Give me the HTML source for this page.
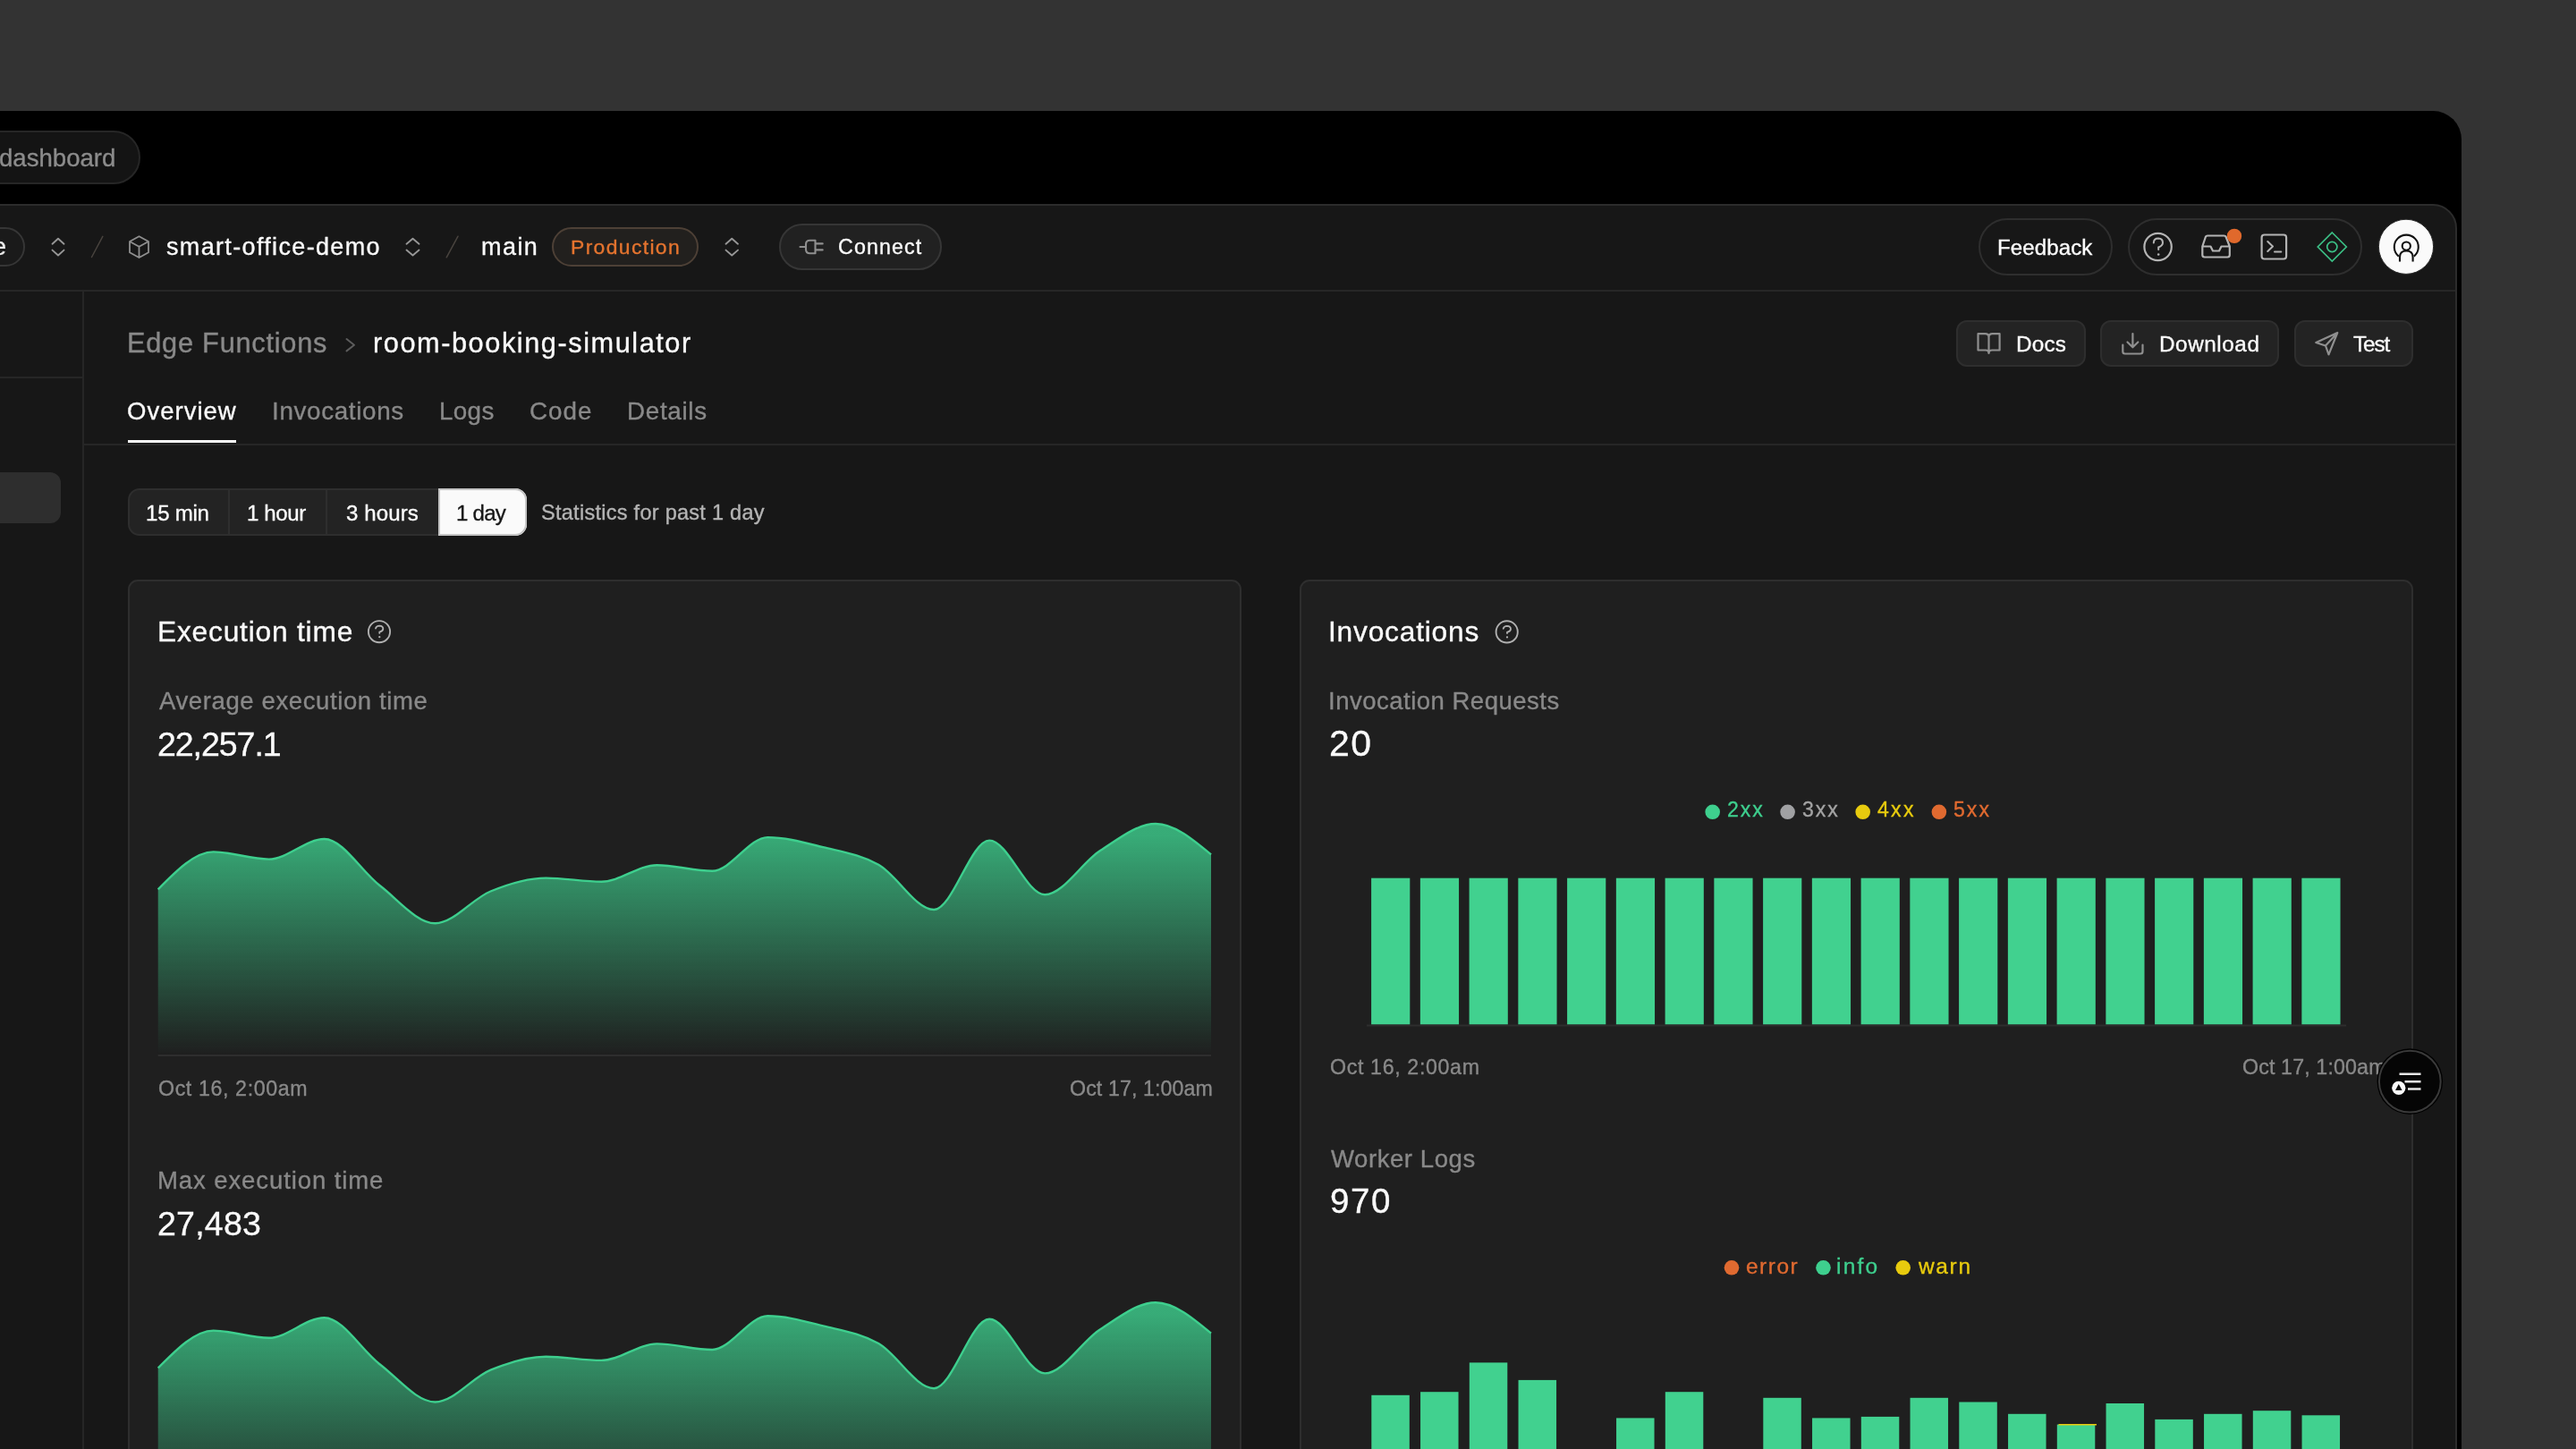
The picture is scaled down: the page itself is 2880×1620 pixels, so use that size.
<!DOCTYPE html>
<html><head><meta charset="utf-8"><style>
html,body{margin:0;padding:0;}
body{width:2880px;height:1620px;overflow:hidden;position:relative;background:#333333;font-family:"Liberation Sans",sans-serif;}
.t{position:absolute;white-space:pre;line-height:1;will-change:transform;-webkit-text-stroke:0.35px currentColor;}
.r{position:absolute;box-sizing:border-box;}
.s{position:absolute;left:0;top:0;overflow:visible;}
</style></head><body>
<div class="r" style="left:-60.00px;top:124.00px;width:2812.00px;height:1576.00px;background:#000000;border-radius:0px;border-top-right-radius:32px;border-radius:0 32px 0 0;"></div>
<div class="r" style="left:-60.00px;top:146.00px;width:217.00px;height:60.00px;background:#141414;border:2px solid #262626;border-radius:30px;box-sizing:border-box;"></div>
<div class="t " style="left:-1.46px;top:162.83px;font-size:27.60px;letter-spacing:0.000px;color:#8c8c8c">dashboard</div>
<div class="r" style="left:-60.00px;top:228.00px;width:2807.00px;height:1472.00px;background:#171717;border:2px solid #2c2c2c;border-radius:0px;box-sizing:border-box;border-radius:0 27px 0 0;"></div>
<div class="r" style="left:0.00px;top:323.50px;width:2745.00px;height:2.00px;background:#262626;border-radius:0px;"></div>
<div class="r" style="left:92.00px;top:325.00px;width:2.00px;height:1295.00px;background:#262626;border-radius:0px;"></div>
<div class="r" style="left:0.00px;top:420.50px;width:93.00px;height:2.00px;background:#262626;border-radius:0px;"></div>
<div class="r" style="left:-20.00px;top:528.00px;width:87.70px;height:56.60px;background:#2e2e2e;border-radius:12px;"></div>
<div class="r" style="left:-60.00px;top:254.00px;width:88.00px;height:44.00px;background:#1a1a1a;border:2px solid #363636;border-radius:22px;box-sizing:border-box;"></div>
<div class="t " style="left:-8.20px;top:262.67px;font-size:26.97px;letter-spacing:0.000px;color:#ededed">e</div>
<div class="t " style="left:186.45px;top:263.07px;font-size:26.97px;letter-spacing:1.356px;color:#fafafa">smart-office-demo</div>
<div class="t " style="left:538.21px;top:263.07px;font-size:26.97px;letter-spacing:1.465px;color:#fafafa">main</div>
<div class="r" style="left:617.00px;top:254.00px;width:164.30px;height:44.00px;background:#22201e;border:2px solid #4d4036;border-radius:22px;box-sizing:border-box;"></div>
<div class="t " style="left:638.32px;top:265.38px;font-size:22.93px;letter-spacing:1.347px;color:#e5742f">Production</div>
<div class="r" style="left:871.00px;top:250.00px;width:181.70px;height:52.10px;background:#212121;border:2px solid #363636;border-radius:26px;box-sizing:border-box;"></div>
<div class="t " style="left:936.82px;top:264.85px;font-size:23.21px;letter-spacing:1.148px;color:#fafafa">Connect</div>
<svg class="s" width="2880" height="1620" viewBox="0 0 2880 1620" ><path d="M58.5,272.7 L65.0,266.8 L71.5,272.7 M58.5,279.6 L65.0,285.5 L71.5,279.6" fill="none" stroke="#979797" stroke-width="1.9" stroke-linecap="round" stroke-linejoin="round"/><path d="M454.5,272.7 L461.5,266.8 L468.5,272.7 M454.5,279.6 L461.5,285.5 L468.5,279.6" fill="none" stroke="#979797" stroke-width="1.9" stroke-linecap="round" stroke-linejoin="round"/><path d="M811.5,272.7 L818.25,266.8 L825,272.7 M811.5,279.6 L818.25,285.5 L825,279.6" fill="none" stroke="#979797" stroke-width="1.9" stroke-linecap="round" stroke-linejoin="round"/><path d="M102.5,287.5 L114.8,264.3 M499.2,287.8 L512,264.2" stroke="#48433e" stroke-width="1.5" stroke-linecap="round"/><path d="M155.5,264.2 L166,270 L166,282.2 L155.5,288 L145,282.2 L145,270 Z M145,270 L155.5,275.8 L166,270 M155.5,275.8 L155.5,288" fill="none" stroke="#8f8f8f" stroke-width="1.8" stroke-linejoin="round"/><path d="M894.5,276 L901,276 M911.5,268.8 L905.5,268.8 Q901,268.8 901,273.3 L901,278.7 Q901,283.2 905.5,283.2 L911.5,283.2 Z M911.5,272.4 L919.7,272.4 M911.5,279.4 L919.7,279.4" fill="none" stroke="#8f8f8f" stroke-width="2.1" stroke-linejoin="round" stroke-linecap="round"/></svg>
<div class="r" style="left:2212.00px;top:244.00px;width:149.60px;height:64.00px;background:none;border:2px solid #2e2e2e;border-radius:32px;box-sizing:border-box;"></div>
<div class="t " style="left:2233.43px;top:264.74px;font-size:24.05px;letter-spacing:0.105px;color:#fafafa">Feedback</div>
<div class="r" style="left:2379.00px;top:244.00px;width:261.50px;height:64.00px;background:none;border:2px solid #2e2e2e;border-radius:32px;box-sizing:border-box;"></div>
<svg class="s" width="2880" height="1620" viewBox="0 0 2880 1620" ><circle cx="2412.6" cy="276" r="15.2" fill="none" stroke="#b4b4b4" stroke-width="2.2"/><path d="M2407.8,271.5 Q2408,266.5 2413,266.5 Q2418,266.8 2418,271.2 Q2418,274.5 2413.2,276.5 L2413.2,279" fill="none" stroke="#b4b4b4" stroke-width="2" stroke-linecap="round"/><circle cx="2413.2" cy="284.5" r="1.3" fill="#b4b4b4"/><path d="M2462.3,275.5 L2466,264.5 Q2466.5,263.5 2468,263.5 L2486.5,263.5 Q2488,263.5 2488.5,264.5 L2492.8,275.5 L2492.8,285 Q2492.8,287.5 2490.3,287.5 L2464.8,287.5 Q2462.3,287.5 2462.3,285 Z M2462.3,275.5 L2471.5,275.5 L2474,280.5 L2481,280.5 L2483.5,275.5 L2492.8,275.5" fill="none" stroke="#b4b4b4" stroke-width="2.2" stroke-linejoin="round"/><circle cx="2498" cy="263.9" r="8.2" fill="#e0692c"/><rect x="2528.6" y="262.5" width="27.5" height="27" rx="3" fill="none" stroke="#b4b4b4" stroke-width="2.2"/><path d="M2535.3,270 L2541,275.5 L2535.3,281 M2543,281.5 L2550.3,281.5" fill="none" stroke="#b4b4b4" stroke-width="2" stroke-linecap="round" stroke-linejoin="round"/><path d="M2607.3,260 L2623.3,276 L2607.3,292 L2591.3,276 Z" fill="none" stroke="#3bbf85" stroke-width="1.7" stroke-linejoin="miter"/><circle cx="2607.3" cy="276" r="5.6" fill="none" stroke="#3bbf85" stroke-width="1.7"/><circle cx="2690" cy="275.8" r="30.6" fill="#fafafa" stroke="#2a2a2a" stroke-width="1"/><path d="M2681.8,286.6 A13.5,13.5 0 1 1 2698.8,286.6" fill="none" stroke="#111" stroke-width="2.1"/><circle cx="2690.3" cy="275.1" r="4.6" fill="none" stroke="#111" stroke-width="2.1"/><path d="M2683,292.4 L2683,287.5 Q2683,280.5 2690.3,280.5 Q2697.6,280.5 2697.6,287.5 L2697.6,292.4" fill="none" stroke="#111" stroke-width="2.1"/></svg>
<div class="t " style="left:141.78px;top:369.09px;font-size:30.72px;letter-spacing:0.767px;color:#898989">Edge Functions</div>
<div class="t " style="left:417.16px;top:369.09px;font-size:30.72px;letter-spacing:1.551px;color:#fafafa">room-booking-simulator</div>
<svg class="s" width="2880" height="1620" viewBox="0 0 2880 1620" ><path d="M387.5,379 L396,385.7 L387.5,392.4" fill="none" stroke="#5c5c5c" stroke-width="2" stroke-linecap="round" stroke-linejoin="round"/></svg>
<div class="r" style="left:2187.20px;top:358.20px;width:144.60px;height:52.10px;background:#232323;border:2px solid #2e2e2e;border-radius:12px;box-sizing:border-box;"></div>
<div class="r" style="left:2348.30px;top:358.20px;width:199.60px;height:52.10px;background:#232323;border:2px solid #2e2e2e;border-radius:12px;box-sizing:border-box;"></div>
<div class="r" style="left:2565.20px;top:358.20px;width:132.70px;height:52.10px;background:#232323;border:2px solid #2e2e2e;border-radius:12px;box-sizing:border-box;"></div>
<div class="t " style="left:2253.50px;top:373.00px;font-size:24.32px;letter-spacing:0.185px;color:#fafafa">Docs</div>
<div class="t " style="left:2414.20px;top:373.00px;font-size:24.32px;letter-spacing:0.540px;color:#fafafa">Download</div>
<div class="t " style="left:2631.05px;top:373.00px;font-size:24.32px;letter-spacing:-1.128px;color:#fafafa">Test</div>
<svg class="s" width="2880" height="1620" viewBox="0 0 2880 1620" ><path d="M2223.5,374.5 L2223.5,393.5 M2211.5,373.2 L2219.5,373.2 Q2223.5,373.2 2223.5,377 Q2223.5,373.2 2227.5,373.2 L2235.6,373.2 L2235.6,391.5 L2227,391.5 Q2223.5,391.5 2223.5,395 Q2223.5,391.5 2220,391.5 L2211.5,391.5 Z" fill="none" stroke="#8f8f8f" stroke-width="2.2" stroke-linejoin="round"/><path d="M2384.4,373 L2384.4,388 M2378.5,382.5 L2384.4,388.3 L2390.3,382.5 M2373.3,385.5 L2373.3,393 Q2373.3,395.5 2375.8,395.5 L2393,395.5 Q2395.5,395.5 2395.5,393 L2395.5,385.5" fill="none" stroke="#8f8f8f" stroke-width="2.2" stroke-linecap="round" stroke-linejoin="round"/><path d="M2613.3,372 L2589.3,383 L2600,386.5 L2603.5,396.3 Z M2600,386.5 L2613.3,372" fill="none" stroke="#8f8f8f" stroke-width="2.2" stroke-linejoin="round" stroke-linecap="round"/></svg>
<div class="t " style="left:142.20px;top:446.20px;font-size:27.52px;letter-spacing:1.006px;color:#fafafa">Overview</div>
<div class="t " style="left:303.73px;top:445.96px;font-size:27.80px;letter-spacing:0.654px;color:#898989">Invocations</div>
<div class="t " style="left:491.02px;top:445.96px;font-size:27.80px;letter-spacing:0.334px;color:#898989">Logs</div>
<div class="t " style="left:592.29px;top:445.96px;font-size:27.80px;letter-spacing:1.029px;color:#898989">Code</div>
<div class="t " style="left:701.22px;top:445.96px;font-size:27.80px;letter-spacing:0.685px;color:#898989">Details</div>
<div class="r" style="left:143.00px;top:491.60px;width:121.00px;height:3.90px;background:#fafafa;border-radius:0px;"></div>
<div class="r" style="left:93.00px;top:496.00px;width:2652.00px;height:2.00px;background:#262626;border-radius:0px;"></div>
<div class="r" style="left:143.00px;top:546.40px;width:445.80px;height:52.60px;background:#232323;border:2px solid #2e2e2e;border-radius:13px;box-sizing:border-box;"></div>
<div class="r" style="left:254.50px;top:548.00px;width:2.00px;height:49.00px;background:#2e2e2e;border-radius:0px;"></div>
<div class="r" style="left:364.00px;top:548.00px;width:2.00px;height:49.00px;background:#2e2e2e;border-radius:0px;"></div>
<div class="r" style="left:490.00px;top:546.20px;width:98.80px;height:52.80px;background:#fafafa;border-radius:0px;border-radius:0 13px 13px 0;box-shadow:0 0 0 2px #c4c4c4 inset;"></div>
<div class="t " style="left:163.17px;top:561.94px;font-size:24.05px;letter-spacing:-0.237px;color:#fafafa">15 min</div>
<div class="t " style="left:276.17px;top:561.94px;font-size:24.05px;letter-spacing:-0.391px;color:#fafafa">1 hour</div>
<div class="t " style="left:387.08px;top:561.94px;font-size:24.05px;letter-spacing:0.096px;color:#fafafa">3 hours</div>
<div class="t " style="left:510.17px;top:561.94px;font-size:24.05px;letter-spacing:-0.737px;color:#171717">1 day</div>
<div class="t " style="left:604.93px;top:562.41px;font-size:23.49px;letter-spacing:0.282px;color:#b4b4b4">Statistics for past 1 day</div>
<div class="r" style="left:143.30px;top:647.50px;width:1244.70px;height:1052.50px;background:#1f1f1f;border:2px solid #2e2e2e;border-radius:11px;box-sizing:border-box;"></div>
<div class="r" style="left:1453.00px;top:647.50px;width:1245.00px;height:1052.50px;background:#1f1f1f;border:2px solid #2e2e2e;border-radius:11px;box-sizing:border-box;"></div>
<div class="t " style="left:176.10px;top:690.97px;font-size:31.69px;letter-spacing:0.804px;color:#fafafa">Execution time</div>
<div class="t " style="left:177.75px;top:770.20px;font-size:27.52px;letter-spacing:0.608px;color:#898989">Average execution time</div>
<div class="t " style="left:176.11px;top:814.22px;font-size:37.53px;letter-spacing:-1.053px;color:#fafafa">22,257.1</div>
<div class="t " style="left:176.90px;top:1206.35px;font-size:23.21px;letter-spacing:0.610px;color:#898989">Oct 16, 2:00am</div>
<div class="t " style="left:1195.60px;top:1206.35px;font-size:23.21px;letter-spacing:0.094px;color:#898989">Oct 17, 1:00am</div>
<div class="t " style="left:175.74px;top:1305.90px;font-size:27.52px;letter-spacing:0.905px;color:#898989">Max execution time</div>
<div class="t " style="left:176.11px;top:1349.72px;font-size:37.53px;letter-spacing:0.230px;color:#fafafa">27,483</div>
<div class="t " style="left:1485.38px;top:690.97px;font-size:31.69px;letter-spacing:0.795px;color:#fafafa">Invocations</div>
<div class="t " style="left:1485.46px;top:770.20px;font-size:27.52px;letter-spacing:0.492px;color:#898989">Invocation Requests</div>
<div class="t " style="left:1486.44px;top:811.29px;font-size:41.00px;letter-spacing:1.559px;color:#fafafa">20</div>
<div class="t " style="left:1486.90px;top:1182.15px;font-size:23.21px;letter-spacing:0.640px;color:#898989">Oct 16, 2:00am</div>
<div class="t " style="left:2506.50px;top:1182.15px;font-size:23.21px;letter-spacing:0.140px;color:#898989">Oct 17, 1:00am</div>
<div class="t " style="left:1487.88px;top:1281.70px;font-size:27.52px;letter-spacing:0.571px;color:#898989">Worker Logs</div>
<div class="t " style="left:1486.70px;top:1323.70px;font-size:38.50px;letter-spacing:1.636px;color:#fafafa">970</div>
<div class="t " style="left:1930.64px;top:894.26px;font-size:23.07px;letter-spacing:1.951px;color:#3ecf8e">2xx</div>
<div class="t " style="left:2014.82px;top:894.26px;font-size:23.07px;letter-spacing:1.960px;color:#a3a3a3">3xx</div>
<div class="t " style="left:2099.37px;top:894.26px;font-size:23.07px;letter-spacing:2.285px;color:#e8cb0e">4xx</div>
<div class="t " style="left:2183.88px;top:894.26px;font-size:23.07px;letter-spacing:2.033px;color:#e06a30">5xx</div>
<div class="t " style="left:1952.46px;top:1403.79px;font-size:24.46px;letter-spacing:1.523px;color:#e06a30">error</div>
<div class="t " style="left:2053.36px;top:1403.79px;font-size:24.46px;letter-spacing:2.240px;color:#3ecf8e">info</div>
<div class="t " style="left:2144.54px;top:1403.79px;font-size:24.46px;letter-spacing:1.676px;color:#e8cb0e">warn</div>
<svg class="s" width="2880" height="1620" viewBox="0 0 2880 1620" ><defs><linearGradient id="g1" x1="0" y1="0" x2="0" y2="1"><stop offset="5%" stop-color="#3ecf8e" stop-opacity="0.8"/><stop offset="100%" stop-color="#3ecf8e" stop-opacity="0"/></linearGradient></defs><path d="M176.70,994.30 C197.35,973.35 218.01,952.40 238.66,952.40 C259.32,952.40 279.97,960.60 300.63,960.60 C321.28,960.60 341.94,938.00 362.59,938.00 C383.24,938.00 403.90,974.28 424.55,990.00 C445.21,1005.72 465.86,1032.30 486.52,1032.30 C507.17,1032.30 527.82,1004.95 548.48,996.50 C569.13,988.05 589.79,981.60 610.44,981.60 C631.10,981.60 651.75,985.70 672.41,985.70 C693.06,985.70 713.71,967.20 734.37,967.20 C755.02,967.20 775.68,973.80 796.33,973.80 C816.99,973.80 837.64,936.10 858.29,936.10 C878.95,936.10 899.60,942.08 920.26,947.20 C940.91,952.32 961.57,955.17 982.22,966.80 C1002.88,978.43 1023.53,1017.00 1044.18,1017.00 C1064.84,1017.00 1085.49,939.60 1106.15,939.60 C1126.80,939.60 1147.46,1000.20 1168.11,1000.20 C1188.76,1000.20 1209.42,964.20 1230.07,951.00 C1250.73,937.80 1271.38,921.00 1292.04,921.00 C1312.69,921.00 1333.35,938.20 1354.00,955.40 L1354,1179.5 L176.7,1179.5 Z" fill="url(#g1)"/><path d="M176.70,994.30 C197.35,973.35 218.01,952.40 238.66,952.40 C259.32,952.40 279.97,960.60 300.63,960.60 C321.28,960.60 341.94,938.00 362.59,938.00 C383.24,938.00 403.90,974.28 424.55,990.00 C445.21,1005.72 465.86,1032.30 486.52,1032.30 C507.17,1032.30 527.82,1004.95 548.48,996.50 C569.13,988.05 589.79,981.60 610.44,981.60 C631.10,981.60 651.75,985.70 672.41,985.70 C693.06,985.70 713.71,967.20 734.37,967.20 C755.02,967.20 775.68,973.80 796.33,973.80 C816.99,973.80 837.64,936.10 858.29,936.10 C878.95,936.10 899.60,942.08 920.26,947.20 C940.91,952.32 961.57,955.17 982.22,966.80 C1002.88,978.43 1023.53,1017.00 1044.18,1017.00 C1064.84,1017.00 1085.49,939.60 1106.15,939.60 C1126.80,939.60 1147.46,1000.20 1168.11,1000.20 C1188.76,1000.20 1209.42,964.20 1230.07,951.00 C1250.73,937.80 1271.38,921.00 1292.04,921.00 C1312.69,921.00 1333.35,938.20 1354.00,955.40" fill="none" stroke="#3ecf8e" stroke-width="2.4"/><rect x="176.7" y="1179.00" width="1177.3" height="2" fill="#2e2e2e"/><path d="M176.70,1529.50 C197.35,1508.55 218.01,1487.60 238.66,1487.60 C259.32,1487.60 279.97,1495.80 300.63,1495.80 C321.28,1495.80 341.94,1473.20 362.59,1473.20 C383.24,1473.20 403.90,1509.48 424.55,1525.20 C445.21,1540.92 465.86,1567.50 486.52,1567.50 C507.17,1567.50 527.82,1540.15 548.48,1531.70 C569.13,1523.25 589.79,1516.80 610.44,1516.80 C631.10,1516.80 651.75,1520.90 672.41,1520.90 C693.06,1520.90 713.71,1502.40 734.37,1502.40 C755.02,1502.40 775.68,1509.00 796.33,1509.00 C816.99,1509.00 837.64,1471.30 858.29,1471.30 C878.95,1471.30 899.60,1477.28 920.26,1482.40 C940.91,1487.52 961.57,1490.37 982.22,1502.00 C1002.88,1513.63 1023.53,1552.20 1044.18,1552.20 C1064.84,1552.20 1085.49,1474.80 1106.15,1474.80 C1126.80,1474.80 1147.46,1535.40 1168.11,1535.40 C1188.76,1535.40 1209.42,1499.40 1230.07,1486.20 C1250.73,1473.00 1271.38,1456.20 1292.04,1456.20 C1312.69,1456.20 1333.35,1473.40 1354.00,1490.60 L1354,1714.7 L176.7,1714.7 Z" fill="url(#g1)"/><path d="M176.70,1529.50 C197.35,1508.55 218.01,1487.60 238.66,1487.60 C259.32,1487.60 279.97,1495.80 300.63,1495.80 C321.28,1495.80 341.94,1473.20 362.59,1473.20 C383.24,1473.20 403.90,1509.48 424.55,1525.20 C445.21,1540.92 465.86,1567.50 486.52,1567.50 C507.17,1567.50 527.82,1540.15 548.48,1531.70 C569.13,1523.25 589.79,1516.80 610.44,1516.80 C631.10,1516.80 651.75,1520.90 672.41,1520.90 C693.06,1520.90 713.71,1502.40 734.37,1502.40 C755.02,1502.40 775.68,1509.00 796.33,1509.00 C816.99,1509.00 837.64,1471.30 858.29,1471.30 C878.95,1471.30 899.60,1477.28 920.26,1482.40 C940.91,1487.52 961.57,1490.37 982.22,1502.00 C1002.88,1513.63 1023.53,1552.20 1044.18,1552.20 C1064.84,1552.20 1085.49,1474.80 1106.15,1474.80 C1126.80,1474.80 1147.46,1535.40 1168.11,1535.40 C1188.76,1535.40 1209.42,1499.40 1230.07,1486.20 C1250.73,1473.00 1271.38,1456.20 1292.04,1456.20 C1312.69,1456.20 1333.35,1473.40 1354.00,1490.60" fill="none" stroke="#3ecf8e" stroke-width="2.4"/><rect x="176.7" y="1714.20" width="1177.3" height="2" fill="#2e2e2e"/><circle cx="424" cy="706.2" r="12.1" fill="none" stroke="#b0b0b0" stroke-width="1.9"/><path d="M420,702.6 Q420.8,699.6 424.2,699.6 Q428.3,699.8000000000001 428.3,703.0 Q428.3,705.4000000000001 424.3,706.7 L424.3,707.9000000000001" fill="none" stroke="#b0b0b0" stroke-width="1.8" stroke-linecap="round"/><circle cx="424.3" cy="712.2" r="1.15" fill="#b0b0b0"/><circle cx="1684.7" cy="706.4" r="12.1" fill="none" stroke="#b0b0b0" stroke-width="1.9"/><path d="M1680.7,702.8 Q1681.5,699.8 1684.9,699.8 Q1689.0,700.0 1689.0,703.1999999999999 Q1689.0,705.6 1685.0,706.9 L1685.0,708.1" fill="none" stroke="#b0b0b0" stroke-width="1.8" stroke-linecap="round"/><circle cx="1685.0" cy="712.4" r="1.15" fill="#b0b0b0"/><rect x="1533.10" y="981.7" width="43.2" height="163.8" fill="#41d18f"/><rect x="1587.85" y="981.7" width="43.2" height="163.8" fill="#41d18f"/><rect x="1642.60" y="981.7" width="43.2" height="163.8" fill="#41d18f"/><rect x="1697.35" y="981.7" width="43.2" height="163.8" fill="#41d18f"/><rect x="1752.10" y="981.7" width="43.2" height="163.8" fill="#41d18f"/><rect x="1806.85" y="981.7" width="43.2" height="163.8" fill="#41d18f"/><rect x="1861.60" y="981.7" width="43.2" height="163.8" fill="#41d18f"/><rect x="1916.35" y="981.7" width="43.2" height="163.8" fill="#41d18f"/><rect x="1971.10" y="981.7" width="43.2" height="163.8" fill="#41d18f"/><rect x="2025.85" y="981.7" width="43.2" height="163.8" fill="#41d18f"/><rect x="2080.60" y="981.7" width="43.2" height="163.8" fill="#41d18f"/><rect x="2135.35" y="981.7" width="43.2" height="163.8" fill="#41d18f"/><rect x="2190.10" y="981.7" width="43.2" height="163.8" fill="#41d18f"/><rect x="2244.85" y="981.7" width="43.2" height="163.8" fill="#41d18f"/><rect x="2299.60" y="981.7" width="43.2" height="163.8" fill="#41d18f"/><rect x="2354.35" y="981.7" width="43.2" height="163.8" fill="#41d18f"/><rect x="2409.10" y="981.7" width="43.2" height="163.8" fill="#41d18f"/><rect x="2463.85" y="981.7" width="43.2" height="163.8" fill="#41d18f"/><rect x="2518.60" y="981.7" width="43.2" height="163.8" fill="#41d18f"/><rect x="2573.35" y="981.7" width="43.2" height="163.8" fill="#41d18f"/><rect x="1528" y="1145.5" width="1095" height="2" fill="#2e2e2e"/><circle cx="1914.7" cy="907.8" r="8.3" fill="#3ecf8e"/><circle cx="1998.6" cy="907.8" r="8.3" fill="#a0a1a3"/><circle cx="2082.7" cy="907.8" r="8.3" fill="#e8cb0e"/><circle cx="2167.9" cy="907.8" r="8.3" fill="#e06a30"/><circle cx="1936" cy="1417.3" r="8.3" fill="#e06a30"/><circle cx="2038.5" cy="1417.3" r="8.3" fill="#3ecf8e"/><circle cx="2127.7" cy="1417.3" r="8.3" fill="#e8cb0e"/><rect x="1533.30" y="1559.8" width="42.5" height="80.2" fill="#41d18f"/><rect x="1588.05" y="1556.2" width="42.5" height="83.8" fill="#41d18f"/><rect x="1642.80" y="1523.4" width="42.5" height="116.6" fill="#41d18f"/><rect x="1697.55" y="1542.9" width="42.5" height="97.1" fill="#41d18f"/><rect x="1807.05" y="1585.4" width="42.5" height="54.6" fill="#41d18f"/><rect x="1861.80" y="1556.2" width="42.5" height="83.8" fill="#41d18f"/><rect x="1971.30" y="1562.8" width="42.5" height="77.2" fill="#41d18f"/><rect x="2026.05" y="1585.4" width="42.5" height="54.6" fill="#41d18f"/><rect x="2080.80" y="1583.9" width="42.5" height="56.1" fill="#41d18f"/><rect x="2135.55" y="1562.8" width="42.5" height="77.2" fill="#41d18f"/><rect x="2190.30" y="1567.5" width="42.5" height="72.5" fill="#41d18f"/><rect x="2245.05" y="1580.8" width="42.5" height="59.2" fill="#41d18f"/><rect x="2299.80" y="1592.6" width="42.5" height="47.4" fill="#41d18f"/><rect x="2354.55" y="1569" width="42.5" height="71.0" fill="#41d18f"/><rect x="2409.30" y="1586.9" width="42.5" height="53.1" fill="#41d18f"/><rect x="2464.05" y="1580.8" width="42.5" height="59.2" fill="#41d18f"/><rect x="2518.80" y="1577.2" width="42.5" height="62.8" fill="#41d18f"/><rect x="2573.55" y="1582.3" width="42.5" height="57.7" fill="#41d18f"/><rect x="2301.5" y="1592" width="42.5" height="1.5" fill="#e8cb0e"/><circle cx="2694.3" cy="1209.1" r="36.8" fill="#000"/><circle cx="2694.3" cy="1209.1" r="34.4" fill="#050505" stroke="#3a3a3a" stroke-width="2"/><path d="M2682.5,1200.8 L2706.5,1200.8 M2688.5,1209.3 L2706.5,1209.3 M2692,1217.5 L2706.5,1217.5" stroke="#e8e8e8" stroke-width="2.6"/><circle cx="2681.8" cy="1216.3" r="7.6" fill="#fafafa"/><path d="M2681.8,1212 L2685.6,1219 L2678,1219 Z" fill="#0b0b0b"/></svg>
</body></html>
